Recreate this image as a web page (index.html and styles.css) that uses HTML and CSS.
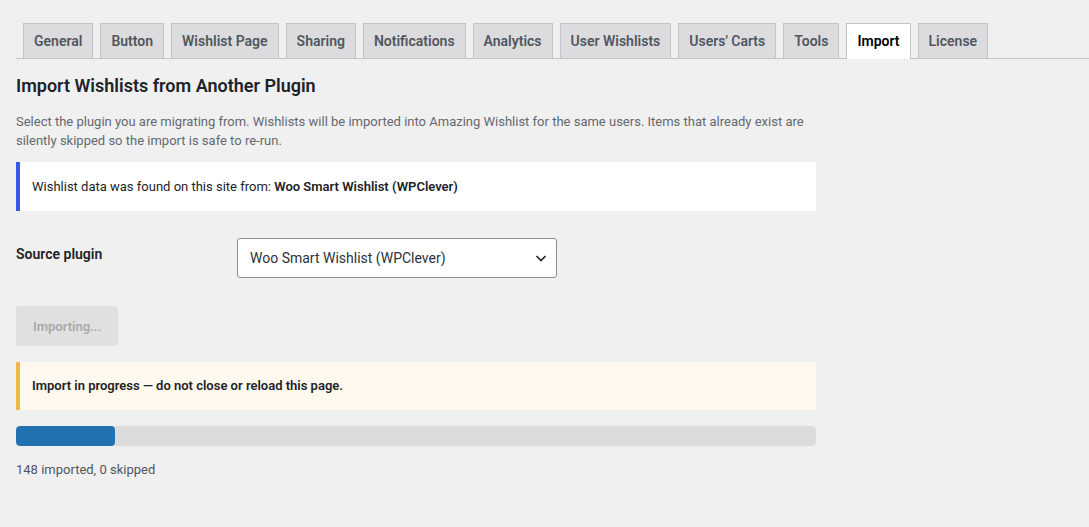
FILE: index.html
```html
<!DOCTYPE html>
<html lang="en">
<head>
<meta charset="UTF-8">
<meta name="viewport" content="width=device-width, initial-scale=1.0">
<title>Amazing Wishlist - Import</title>
<link rel="stylesheet" href="styles.css">
</head>
<body>

<div class="wrap">
  <!-- tabs -->
  <nav class="nav-tab-wrapper">
    <a class="nav-tab" href="#">General</a>
    <a class="nav-tab" href="#">Button</a>
    <a class="nav-tab" href="#">Wishlist Page</a>
    <a class="nav-tab" href="#">Sharing</a>
    <a class="nav-tab" href="#">Notifications</a>
    <a class="nav-tab" href="#">Analytics</a>
    <a class="nav-tab" href="#">User Wishlists</a>
    <a class="nav-tab" href="#">Users' Carts</a>
    <a class="nav-tab" href="#">Tools</a>
    <a class="nav-tab nav-tab-active" href="#">Import</a>
    <a class="nav-tab" href="#">License</a>
  </nav>

  <div class="content">
    <h2 class="title">Import Wishlists from Another Plugin</h2>
    <p class="description">Select the plugin you are migrating from. Wishlists will be imported into Amazing Wishlist for the same users. Items that already exist are silently skipped so the import is safe to re-run.</p>

    <div class="notice notice-info">
      Wishlist data was found on this site from: <strong>Woo Smart Wishlist (WPClever)</strong>
    </div>

    <div class="field-row">
      <label class="field-label" for="source">Source plugin</label>
      <div class="select-wrap">
        <select id="source" class="source-select">
          <option>Woo Smart Wishlist (WPClever)</option>
          <option>YITH WooCommerce Wishlist</option>
          <option>TI WooCommerce Wishlist</option>
        </select>
        <svg class="chevron" width="16" height="16" viewBox="0 0 16 16" aria-hidden="true">
          <path d="M3.5 6 L8 10.5 L12.5 6" fill="none" stroke="#1d2327" stroke-width="1.6"/>
        </svg>
      </div>
    </div>

    <button type="button" class="button-import" disabled>Importing...</button>

    <div class="notice notice-warning">
      <strong>Import in progress — do not close or reload this page.</strong>
    </div>

    <div class="progress">
      <div class="progress-fill" style="width: 12.4%"></div>
    </div>

    <p class="progress-status">148 imported, 0 skipped</p>
  </div>
</div>

</body>
</html>
```

FILE: styles.css
```css
/* admin page look */
body {
  margin: 0;
  background-color: #f0f0f1;
  color: #1d2327;
  font-family: Roboto, "Noto Sans", sans-serif;
  font-size: 13px;
}

.wrap {
  padding: 23px 0 40px 16px;
}

/* tabs */
.nav-tab-wrapper {
  display: flex;
  border-bottom: 1px solid #c3c4c7;
}

.nav-tab {
  margin-left: 7px;
  padding: 5px 10px;
  border: 1px solid #c3c4c7;
  border-bottom: none;
  background-color: #dcdcde;
  color: #50575e;
  font-size: 14px;
  font-weight: 600;
  line-height: 24px;
  text-decoration: none;
}

.nav-tab-active {
  background-color: #fff;
  color: #000;
  margin-bottom: -1px;
  padding-bottom: 6px;
}

.content {
  width: 800px;
}

.title {
  margin: 15px 0 0;
  font-size: 18px;
  font-weight: 600;
  line-height: 23px;
}

.description {
  margin: 15px 0 0;
  color: #646970;
  line-height: 19px;
}

.notice {
  margin-top: 12px;
  padding: 15px 12px;
  border-left: 4px solid;
  line-height: 19px;
}

.notice-info {
  background-color: #fff;
  border-left-color: #3858e9;
}

.notice-info strong {
  font-weight: 600;
}

.notice-warning {
  margin-top: 16px;
  padding: 14px 12px 15px;
  background-color: #fef8ee;
  border-left-color: #f0b849;
}

.notice-warning strong {
  font-weight: 600;
}

/* source plugin row */
.field-row {
  display: flex;
  align-items: flex-start;
  margin-top: 27px;
}

.field-label {
  width: 221px;
  padding-top: 7px;
  font-size: 14px;
  font-weight: 600;
  line-height: 19px;
}

.select-wrap {
  position: relative;
}

.source-select {
  appearance: none;
  -webkit-appearance: none;
  width: 320px;
  height: 40px;
  padding: 0 30px 0 12px;
  border: 1px solid #8c8f94;
  border-radius: 3px;
  background-color: #fff;
  color: #2c3338;
  font-family: inherit;
  font-size: 14px;
}

.chevron {
  position: absolute;
  right: 8px;
  top: 12px;
  pointer-events: none;
}

.button-import {
  display: block;
  margin-top: 28px;
  height: 40px;
  padding: 0 17px;
  border: none;
  border-radius: 3px;
  background-color: #e0e0e0;
  color: #a7aaad;
  font-family: inherit;
  font-size: 13px;
  font-weight: 600;
}

/* progress */
.progress {
  margin-top: 16px;
  height: 20px;
  border-radius: 4px;
  background-color: #dcdcde;
  overflow: hidden;
}

.progress-fill {
  height: 100%;
  background-color: #2271b1;
  border-radius: 4px;
}

.progress-status {
  margin: 14px 0 0;
  color: #50575e;
  line-height: 19px;
}
```
